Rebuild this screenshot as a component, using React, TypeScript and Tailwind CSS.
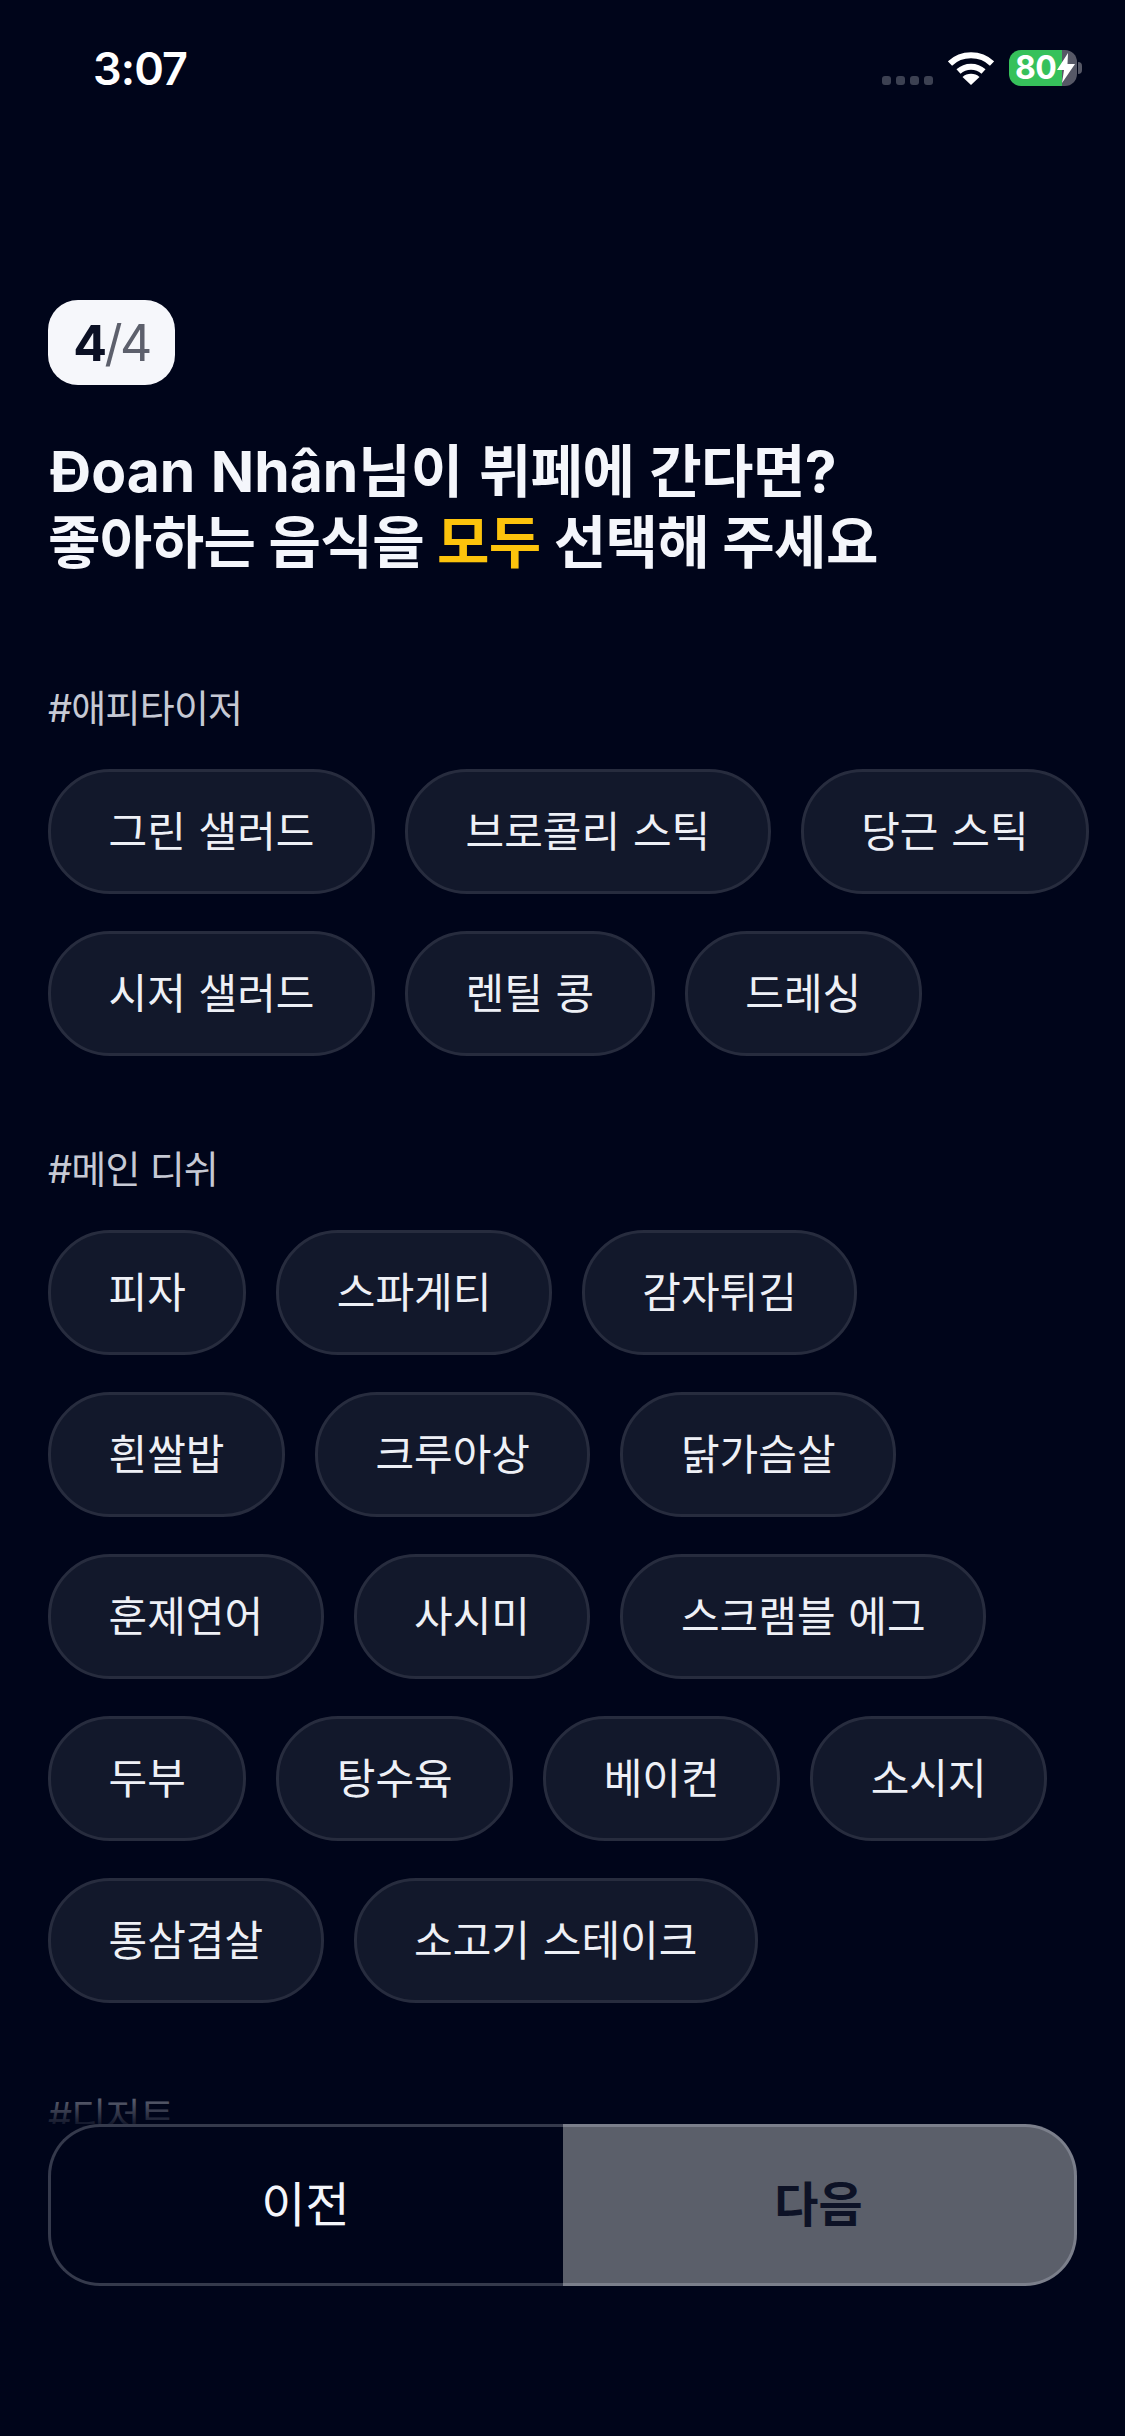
const FONT = "font-['Inter','Noto_Sans_CJK_KR',sans-serif]";

const sections = [
  {
    label: '#애피타이저',
    rows: [
      ['그린 샐러드', '브로콜리 스틱', '당근 스틱'],
      ['시저 샐러드', '렌틸 콩', '드레싱'],
    ],
  },
  {
    label: '#메인 디쉬',
    rows: [
      ['피자', '스파게티', '감자튀김'],
      ['흰쌀밥', '크루아상', '닭가슴살'],
      ['훈제연어', '사시미', '스크램블 에그'],
      ['두부', '탕수육', '베이컨', '소시지'],
      ['통삼겹살', '소고기 스테이크'],
    ],
  },
];

function StatusBar() {
  return (
    <div className="flex items-center justify-between h-[136px] pl-[93px] pr-[43px]">
      <span className="text-[45px] font-semibold text-white tracking-[-0.02em] leading-none">3:07</span>
      <div className="flex items-center">
        <div className="flex gap-[5px] mt-[24px] mr-[15px]">
          <div className="w-[9px] h-[9px] rounded-[3px] bg-[#3c4152]" />
          <div className="w-[9px] h-[9px] rounded-[3px] bg-[#3c4152]" />
          <div className="w-[9px] h-[9px] rounded-[3px] bg-[#3c4152]" />
          <div className="w-[9px] h-[9px] rounded-[3px] bg-[#3c4152]" />
        </div>
        <svg width="46" height="34" viewBox="0 0 46 34" fill="none">
          <path d="M2 12.5C13.5 1.5 32.5 1.5 44 12.5" stroke="white" strokeWidth="6" strokeLinecap="butt" />
          <path d="M10.5 20.5C17.5 14 28.5 14 35.5 20.5" stroke="white" strokeWidth="6" />
          <path d="M23 34L14.5 26C19 21.8 27 21.8 31.5 26L23 34Z" fill="white" />
        </svg>
        <div className="relative flex w-[68px] h-[36px] ml-[15px]">
          <div className="w-[53px] rounded-l-[12px] bg-[#36c15b]" />
          <div className="flex-1 rounded-r-[12px] bg-[#565866]" />
          <div className="absolute inset-0 flex items-center pl-[6px]">
            <span className="text-[32px] font-bold text-white leading-none tracking-[-0.02em]">80</span>
            <svg width="18" height="30" viewBox="0 0 18 30" className="ml-[1px]">
              <path d="M11 0L0 17H7L5 30L18 11H10.5L11 0Z" fill="white" />
            </svg>
          </div>
        </div>
        <div className="w-[4px] h-[12px] ml-[1px] rounded-r-full bg-[#565866]" />
      </div>
    </div>
  );
}

function Chip({ text }: { text: string }) {
  return (
    <div className="h-[125px] px-[57.5px] flex items-center rounded-[62px] border-[3px] border-[#272c3e] bg-[#12182b] text-[42px] text-[#eef0f6] whitespace-nowrap [word-spacing:1px]">
      {text}
    </div>
  );
}

export default function App() {
  return (
    <div className={`relative h-[2436px] overflow-hidden bg-[#00051a] ${FONT}`}>
      <StatusBar />

      <div className="px-[48px] pt-[164px]">
        <div className="flex items-center justify-center w-[127px] h-[85px] rounded-[30px] bg-[#f6f7fb] text-[50px] leading-none tracking-[-0.05em]">
          <span className="font-bold text-[#0b1024]">4</span>
          <span className="text-[#5d606c]">/4</span>
        </div>

        <h1 className="mt-[51px] text-[57px] leading-[71px] font-bold tracking-[-0.01em] text-[#f4f6fb]">
          <span className="ml-[2px] tracking-normal [word-spacing:2px]">Đoan Nhân님이 </span>
          <span className="[word-spacing:2px]">뷔페에 간다면?</span>
          <br />
          좋아하는 음식을 <span className="text-[#fcc30c]">모두</span> 선택해 주세요
        </h1>

        <div className="mt-[106px] flex flex-col gap-[89px]">
          {sections.map((section) => (
            <section key={section.label}>
              <h2 className="h-[48px] leading-[48px] text-[38px] font-normal text-[#c6c9d4] tracking-[-0.02em]">
                {section.label}
              </h2>
              <div className="mt-[37px] flex flex-col gap-[37px]">
                {section.rows.map((row) => (
                  <div key={row[0]} className="flex gap-[30px]">
                    {row.map((item) => (
                      <Chip key={item} text={item} />
                    ))}
                  </div>
                ))}
              </div>
            </section>
          ))}
          <h2 className="h-[48px] leading-[48px] text-[38px] font-normal text-[#c6c9d4] tracking-[-0.02em]">#디저트</h2>
        </div>
      </div>

      <div className="absolute left-0 right-0 bottom-0 flex flex-col">
        <div className="h-[64px] bg-gradient-to-b from-[#00051a]/0 to-[#00051a]/90" />
        <div className="h-[312px] bg-[#00051a]">
          <div className="flex mx-[48px] h-[162px]">
            <button className={`w-[515px] pr-[3px] rounded-l-[52px] border-[3px] border-r-0 border-[#353a4c] text-[48px] text-[#f4f6fb] ${FONT}`}>
              이전
            </button>
            <button className={`flex-1 rounded-r-[52px] border-[3px] border-l-0 border-[#7b7f8b] bg-[#5b5f6a] text-[48px] font-bold text-[#0d1226] ${FONT}`}>
              다음
            </button>
          </div>
        </div>
      </div>
    </div>
  );
}
